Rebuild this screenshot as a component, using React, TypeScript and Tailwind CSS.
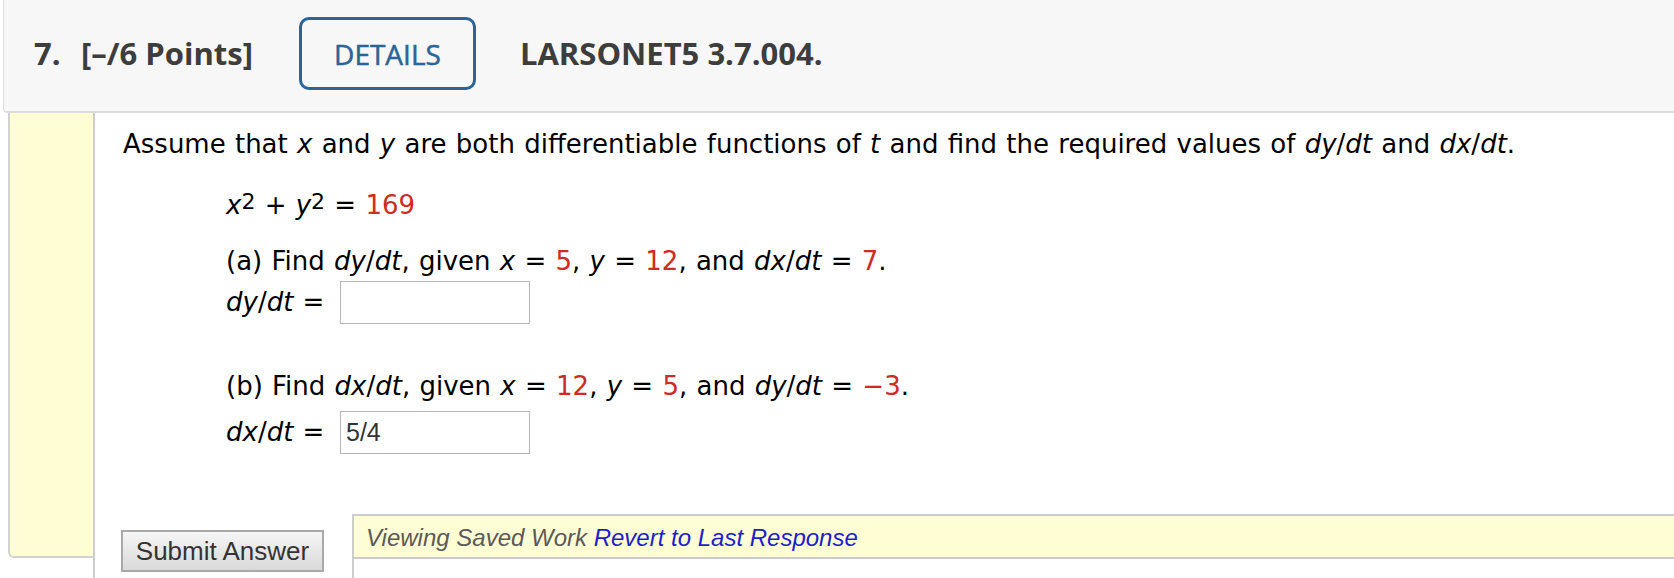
import React from 'react';

const serif = { fontFamily: '"DejaVu Sans", Verdana, sans-serif' };

function Red({ children }: { children: React.ReactNode }) {
  return <span className="text-[#cf2a24]">{children}</span>;
}

function Sq() {
  return <span className="relative -top-[5px] text-[22px]">2</span>;
}

function AnswerRow({ label, value }: { label: React.ReactNode; value?: string }) {
  return (
    <div className="flex items-center">
      <div className="w-[114px] whitespace-nowrap">{label} =</div>
      <div
        className="flex h-[43px] w-[190px] items-center border border-[#b5b5b5] bg-white pl-[5px] text-[25px] text-[#333]"
        style={{ fontFamily: '"Liberation Sans", Arial, sans-serif' }}
      >
        {value}
      </div>
    </div>
  );
}

export default function App() {
  return (
    <div className="h-[578px] w-full overflow-hidden bg-white">
      {/* Header */}
      <div
        className="ml-[3px] flex h-[113px] items-center rounded-bl-[4px] border-b-2 border-l border-[#dddddd] bg-[#f7f7f7] pb-[4px] pl-[30px] text-[#3d3d3d]"
        style={{ fontFamily: '"Open Sans", sans-serif' }}
      >
        <span className="w-[47px] text-[31px] font-bold">7.</span>
        <span className="text-[31px] font-bold">[–/6 Points]</span>
        <div className="ml-[46px] flex h-[73px] w-[177px] items-center justify-center rounded-[10px] border-[3px] border-[#2b6496] text-[28px] text-[#2b6496] [-webkit-text-stroke:0.5px_#2b6496]">
          DETAILS
        </div>
        <span className="ml-[44px] text-[31px] font-bold">LARSONET5 3.7.004.</span>
      </div>

      <div className="flex">
        {/* left strip */}
        <div className="ml-[8px] h-[445px] w-[85px] rounded-bl-[6px] border-b-2 border-l-2 border-[#d2d2d2] bg-[#fffdd3]" />

        {/* main column */}
        <div className="h-[465px] flex-1 border-l-2 border-[#cccccc]">
          <div className="pl-[28px] pt-[16px] text-[26px] leading-[31px] text-black [word-spacing:1px]" style={serif}>
            <p className="whitespace-nowrap">
              Assume that <i>x</i> and <i>y</i> are both differentiable functions of <i>t</i> and find the required
              values of <i>dy</i>/<i>dt</i> and <i>dx</i>/<i>dt</i>.
            </p>

            <div className="pl-[103px]">
              <p className="mt-[30px] whitespace-nowrap">
                <i>x</i>
                <Sq /> + <i>y</i>
                <Sq /> = <Red>169</Red>
              </p>

              <p className="mt-[24px] whitespace-nowrap">
                (a) Find <i>dy</i>/<i>dt</i>, given <i>x</i> = <Red>5</Red>, <i>y</i> = <Red>12</Red>, and{' '}
                <i>dx</i>/<i>dt</i> = <Red>7</Red>.
              </p>
              <div className="mt-[4px]">
                <AnswerRow
                  label={
                    <>
                      <i>dy</i>/<i>dt</i>
                    </>
                  }
                />
              </div>

              <p className="mt-[47px] whitespace-nowrap">
                (b) Find <i>dx</i>/<i>dt</i>, given <i>x</i> = <Red>12</Red>, <i>y</i> = <Red>5</Red>, and{' '}
                <i>dy</i>/<i>dt</i> = <Red>−3</Red>.
              </p>
              <div className="mt-[9px]">
                <AnswerRow
                  label={
                    <>
                      <i>dx</i>/<i>dt</i>
                    </>
                  }
                  value="5/4"
                />
              </div>
            </div>
          </div>

          {/* submit + status */}
          <div className="mt-[60px] flex items-start" style={{ fontFamily: '"Liberation Sans", Arial, sans-serif' }}>
            <button className="ml-[26px] mt-[16px] h-[42px] w-[203px] border-2 border-[#a9a9a9] bg-gradient-to-b from-[#f6f6f6] to-[#d9d9d9] text-[26px] text-[#333]">
              Submit Answer
            </button>
            <div className="ml-[28px] h-[70px] flex-1 border-l-2 border-t-2 border-[#cccccc]">
              <div className="h-[43px] border-b-2 border-[#cccccc] bg-[#fffdd3] pl-[12px] pt-[4px] text-[24px] italic">
                <span className="text-[#5a5a5a]">Viewing Saved Work</span>{' '}
                <span className="text-[#1d1dcc]">Revert to Last Response</span>
              </div>
            </div>
          </div>
        </div>
      </div>
    </div>
  );
}
